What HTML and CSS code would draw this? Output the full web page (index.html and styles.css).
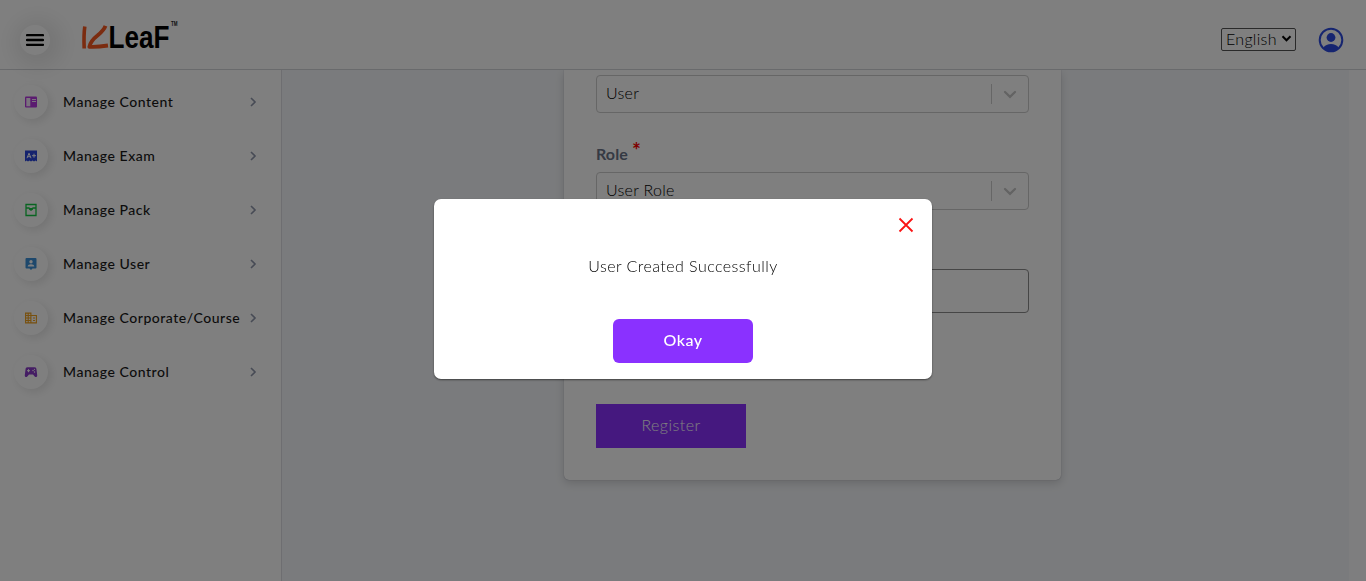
FILE: index.html
```html
<!DOCTYPE html>
<html lang="en">
<head>
<meta charset="utf-8">
<title>Manage User</title>
<link rel="stylesheet" href="styles.css">
</head>
<body>
<div class="app">
  <header class="header">
    <button class="menu-btn" aria-label="Menu"><svg width="18" height="14" viewBox="0 0 18 14"><path d="M1 2.2h16M1 7h16M1 11.8h16" stroke="#000" stroke-width="2.3" stroke-linecap="round"/></svg></button>
    <svg class="logo" width="110" height="50" viewBox="0 0 110 50">
      <path d="M5.8 11.5Q4.6 20 5.2 33.5" fill="none" stroke="#f75820" stroke-width="3.6"/>
      <path d="M26.5 10.8Q25 15 18.5 20.5Q11.5 26 10.4 31.8Q18 32.2 29 30.5" fill="none" stroke="#f75820" stroke-width="3.9" stroke-linejoin="round"/>
      <text class="logo-text" x="29.5" y="33" textLength="61" lengthAdjust="spacingAndGlyphs">LeaF</text>
      <text class="logo-tm" x="92" y="10.5" textLength="6.5" lengthAdjust="spacingAndGlyphs">TM</text>
    </svg>
    <div class="language"><span>English</span><svg width="11" height="7" viewBox="0 0 11 7"><path d="M1.5 1.3l4 4 4-4" fill="none" stroke="#000" stroke-width="2"/></svg></div>
    <svg class="avatar" width="26" height="26" viewBox="0 0 26 26" fill="#2d4be0"><circle cx="13" cy="13" r="11.3" fill="none" stroke="#2d4be0" stroke-width="2"/><circle cx="13" cy="10.5" r="4.4"/><path d="M5.5 20.5C8 15.7 18 15.7 20.5 20.5C17 25.5 9 25.5 5.5 20.5Z"/></svg>
  </header>
  <div class="body">
    <nav class="sidebar">
      <div class="item"><span class="disc"><svg width="14" height="14" viewBox="0 0 14 14"><rect x="1" y="1.5" width="12" height="11" rx="1" fill="#b637e0"/><path d="M2.3 3h4v8.3h-4z" fill="#f4e6fa"/><path d="M8 4.5h4M8 6.5h4" stroke="#f4e6fa"/></svg></span><span class="label">Manage Content</span><svg class="chev" width="8" height="10" viewBox="0 0 8 10"><path d="M2 1l4 4-4 4"/></svg></div>
      <div class="item"><span class="disc"><svg width="14" height="14" viewBox="0 0 14 14"><path d="M1 1.5h12v11l-1.5-1-1.5 1-1.5-1-1.5 1-1.5-1-1.5 1-1.5-1-1.5 1z" fill="#2a46dc"/><path d="M3 9.2l2-5 2 5M3.6 7.7h2.8M8 6.7h4M10 4.7v4" fill="none" stroke="#fff"/></svg></span><span class="label">Manage Exam</span><svg class="chev" width="8" height="10" viewBox="0 0 8 10"><path d="M2 1l4 4-4 4"/></svg></div>
      <div class="item"><span class="disc"><svg width="14" height="14" viewBox="0 0 14 14"><path d="M2 1.5h10v11H2zM2 5h3l1 1h2l1-1h3" fill="none" stroke="#13c943" stroke-width="1.3"/><path d="M5 5h4v1.5L7 8 5 6.5z" fill="#13c943"/></svg></span><span class="label">Manage Pack</span><svg class="chev" width="8" height="10" viewBox="0 0 8 10"><path d="M2 1l4 4-4 4"/></svg></div>
      <div class="item"><span class="disc"><svg width="14" height="14" viewBox="0 0 14 14"><path d="M2.5 1h9q1 0 1 1v8.5q0 1-1 1h-3L7 13l-1.5-1.5h-3q-1 0-1-1V2q0-1 1-1z" fill="#3c91d8"/><circle cx="7" cy="4.8" r="1.7" fill="#fff"/><path d="M3.7 9.5c0-3 6.6-3 6.6 0z" fill="#fff"/></svg></span><span class="label">Manage User</span><svg class="chev" width="8" height="10" viewBox="0 0 8 10"><path d="M2 1l4 4-4 4"/></svg></div>
      <div class="item"><span class="disc"><svg width="14" height="14" viewBox="0 0 14 14"><path d="M1.6 2.1h5.3v9.8H1.6zM6.9 4.5h5.5v7.4H6.9M1.6 4.5h5.3M1.6 7h5.3M1.6 9.5h5.3M4.2 2v10M9 7h2M9 9.5h2" fill="none" stroke="#f0a01c" stroke-width="1.1"/></svg></span><span class="label">Manage Corporate/Course</span><svg class="chev" width="8" height="10" viewBox="0 0 8 10"><path d="M2 1l4 4-4 4"/></svg></div>
      <div class="item"><span class="disc"><svg width="14" height="14" viewBox="0 0 14 14"><path d="M3.5 2.2h7c1.5 0 1.8.8 2 2.3l.7 5.5c.3 2.1-1.5 2.6-2.5 1.5L9 9.5H5l-1.7 2c-1 1.1-2.800.6-2.500-1.500l.7-5.500c.2-1.500.5-2.300 2-2.300z" fill="#8a3bc8"/><path d="M3 5.7h3M4.5 4.2v3" stroke="#fff"/><circle cx="9" cy="5.5" r=".7" fill="#fff"/><circle cx="10.5" cy="7" r=".7" fill="#fff"/><circle cx="10.5" cy="4.3" r=".6" fill="#fff"/></svg></span><span class="label">Manage Control</span><svg class="chev" width="8" height="10" viewBox="0 0 8 10"><path d="M2 1l4 4-4 4"/></svg></div>
    </nav>
    <main class="main">
      <form class="card">
        <div class="select"><span>User</span><i class="divider"></i><svg class="arrow" width="14" height="9" viewBox="0 0 14 9"><path d="M2 2l5 4.8L12 2"/></svg></div>
        <div class="field-label"><span>Role</span><span class="req">*</span></div>
        <div class="select"><span>User Role</span><i class="divider"></i><svg class="arrow" width="14" height="9" viewBox="0 0 14 9"><path d="M2 2l5 4.8L12 2"/></svg></div>
        <div class="input"></div>
        <div class="register"><span>Register</span></div>
      </form>
    </main>
    <div class="gutter"></div>
  </div>
</div>
<div class="overlay">
  <div class="modal">
    <svg class="close" width="16" height="16" viewBox="0 0 16 16"><path d="M1.5 1.5l13 13M14.5 1.5l-13 13" stroke="#fa1414" stroke-width="1.8"/></svg>
    <p class="message">User Created Successfully</p>
    <div class="okay"><span>Okay</span></div>
  </div>
</div>
</body>
</html>
```
FILE: styles.css
```css
* { box-sizing: border-box; }
body { margin: 0; font-family: Lato, "Liberation Sans", sans-serif; overflow: hidden; }
.app { height: 581px; display: flex; flex-direction: column; background: #fff; }
.header { height: 70px; flex: none; border-bottom: 1px solid #d2d4d8; display: flex; align-items: center; padding: 10px 22px 0 20px; }
.menu-btn { width: 30px; height: 30px; border: 0; border-radius: 50%; padding: 0; background: #fff; display: flex; align-items: center; justify-content: center; box-shadow: 3px 3px 22px 9px rgba(0,0,0,.09); }
.logo { margin: 0 0 0 29px; overflow: visible; }
.logo-text { font: bold 31px "Liberation Sans", sans-serif; fill: #000; }
.logo-tm { font: bold 6.5px "Liberation Sans", sans-serif; fill: #222; }
.language { margin-left: auto; width: 75px; height: 23px; border: 1px solid #555; border-radius: 2px; display: flex; align-items: center; justify-content: space-between; padding: 0 3px 2px 4px; font-size: 16px; color: #000; font-weight: 300; letter-spacing: .3px; }
.avatar { margin-left: 22px; }
.body { flex: 1; min-height: 0; display: flex; }
.sidebar { width: 282px; flex: none; border-right: 1px solid #dcdde2; padding-top: 5px; }
.item { height: 54px; display: flex; align-items: center; padding: 0 24px 0 14px; }
.disc { width: 34px; height: 34px; border-radius: 50%; display: flex; align-items: center; justify-content: center; background: #fff; box-shadow: 3px 3px 10px rgba(0,0,0,.1); }
.label { margin-left: 15px; padding-bottom: 2px; font-size: 14px; font-weight: 500; color: #191919; letter-spacing: .53px; white-space: nowrap; }
.chev { margin-left: auto; }
.chev path { fill: none; stroke: #8e96aa; stroke-width: 1.6; }
.main { flex: 1; background: #f5f7fa; overflow: hidden; display: flex; justify-content: center; align-items: flex-start; padding-right: 9px; }
.gutter { width: 17px; background: #fdfdfe; }
.card { width: 497px; height: 410px; margin-left: 3px; background: #fff; border-radius: 0 0 5px 5px; box-shadow: 0 3px 10px rgba(0,0,0,.16), 0 0 1px #99a; padding: 5px 32px 0; }
.select { height: 38px; border: 1px solid #ccc; border-radius: 4px; display: flex; align-items: center; padding: 0 11px 0 9px; font-size: 16px; font-weight: 300; letter-spacing: .3px; color: #000; }
.select span { padding-bottom: 3px; }
.divider { width: 1px; height: 20px; background: #ccc; margin-left: auto; }
.arrow { margin-left: 11px; }
.arrow path { fill: none; stroke: #c6c6c6; stroke-width: 2.3; stroke-linecap: round; }
.field-label { height: 59px; padding-top: 31px; font-size: 16px; line-height: 20px; font-weight: 700; color: #6b7488; display: flex; letter-spacing: .1px; }
.req { color: #f00; margin: -4px 0 0 4px; font-size: 21px; }
.input { height: 44px; margin-top: 59px; border: 1px solid #8c8c8c; border-radius: 4px; }
.register { width: 150px; height: 44px; margin-top: 91px; padding-bottom: 3px; background: #8a31ff; color: #fff; font-size: 16px; font-weight: 300; display: flex; align-items: center; justify-content: center; letter-spacing: .45px; }
.overlay { position: fixed; inset: 0; background: rgba(0,0,0,.5); display: flex; justify-content: center; align-items: flex-start; padding-top: 199px; }
.modal { width: 498px; height: 180px; background: #fff; border-radius: 7px; display: flex; flex-direction: column; align-items: center; padding: 18px 18px 16px; box-shadow: 0 1px 2px rgba(0,0,0,.5); }
.close { align-self: flex-end; flex: none; }
.message { margin: 22px 0 0; font-size: 16px; line-height: 22px; font-weight: 300; color: #000; letter-spacing: .45px; }
.okay { width: 140px; height: 44px; margin-top: auto; padding-bottom: 3px; background: #8a31ff; border-radius: 6px; color: #fff; font-size: 16px; font-weight: 500; display: flex; align-items: center; justify-content: center; letter-spacing: .5px; }
```
